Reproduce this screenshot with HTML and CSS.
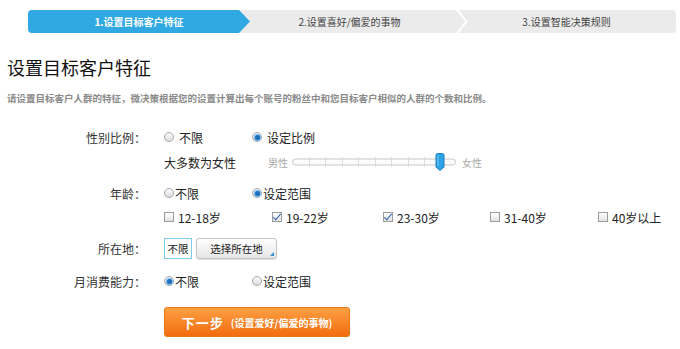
FILE: index.html
```html
<!DOCTYPE html>
<html lang="zh-CN">
<head>
<meta charset="utf-8">
<title>设置目标客户特征</title>
<link rel="stylesheet" href="styles.css">
</head>
<body>
<div class="page">
  <div class="steps">
    <div class="step step-active">1.设置目标客户特征</div>
    <div class="step step-mid">2.设置喜好/偏爱的事物
      <svg class="chev" width="12" height="23" viewBox="0 0 12 23"><polyline points="0.5,-1 10.5,11.5 0.5,24" fill="none" stroke="#fff" stroke-width="2"/></svg>
    </div>
    <div class="step step-last">3.设置智能决策规则</div>
  </div>

  <h1 class="title">设置目标客户特征</h1>
  <p class="desc">请设置目标客户人群的特征，微决策根据您的设置计算出每个账号的粉丝中和您目标客户相似的人群的个数和比例。</p>

  <div class="form">
    <div class="row r1">
      <div class="label">性别比例：</div>
      <div class="opts">
        <span class="opt"><span class="radio"></span><span class="gap">不限</span></span>
        <span class="opt"><span class="radio on"></span><span class="gap">设定比例</span></span>
      </div>
    </div>
    <div class="row r2">
      <div class="label"></div>
      <div class="ratio">
        <span class="ratio-text">大多数为女性</span>
        <span class="sl-lab">男性</span>
        <svg class="slider" width="166" height="20" viewBox="0 0 166 20">
          <rect x="0.5" y="7" width="163" height="6" rx="3" fill="#fbfbfb" stroke="#c9c9c9"/>
          <g stroke="#dcdcdc" stroke-width="1">
            <line x1="17.5" y1="5" x2="17.5" y2="15"/>
            <line x1="33.5" y1="5" x2="33.5" y2="15"/>
            <line x1="50.5" y1="5" x2="50.5" y2="15"/>
            <line x1="66.5" y1="5" x2="66.5" y2="15"/>
            <line x1="83.5" y1="5" x2="83.5" y2="15"/>
            <line x1="99.5" y1="5" x2="99.5" y2="15"/>
            <line x1="116.5" y1="5" x2="116.5" y2="15"/>
            <line x1="132.5" y1="5" x2="132.5" y2="15"/>
          </g>
          <path d="M145.5 1.5 h5 a1.5 1.5 0 0 1 1.5 1.5 V15 L148 18.5 L144 15 V3 a1.5 1.5 0 0 1 1.5 -1.5 Z" fill="#2ca3e6" stroke="#1c80c2"/>
          <line x1="146" y1="3" x2="146" y2="14" stroke="#7cc8f2" stroke-width="1"/>
        </svg>
        <span class="sl-lab">女性</span>
      </div>
    </div>
    <div class="row r3">
      <div class="label">年龄：</div>
      <div class="opts">
        <span class="opt"><span class="radio"></span>不限</span>
        <span class="opt"><span class="radio on"></span>设定范围</span>
      </div>
    </div>
    <div class="row r4">
      <div class="label"></div>
      <div class="opts">
        <span class="opt chk-opt"><span class="chk"></span>12-18岁</span>
        <span class="opt chk-opt"><span class="chk on"></span>19-22岁</span>
        <span class="opt chk-opt"><span class="chk on"></span>23-30岁</span>
        <span class="opt chk-opt"><span class="chk"></span>31-40岁</span>
        <span class="opt chk-opt"><span class="chk"></span>40岁以上</span>
      </div>
    </div>
    <div class="row r5">
      <div class="label">所在地：</div>
      <div class="opts">
        <span class="loc-box">不限</span>
        <button class="loc-btn" type="button">选择所在地</button>
      </div>
    </div>
    <div class="row r6">
      <div class="label">月消费能力：</div>
      <div class="opts">
        <span class="opt"><span class="radio on"></span>不限</span>
        <span class="opt"><span class="radio"></span>设定范围</span>
      </div>
    </div>
    <div class="row r7">
      <div class="label"></div>
      <button class="next" type="button"><span class="next-main">下一步</span><span class="next-sub">(设置爱好/偏爱的事物)</span></button>
    </div>
  </div>
</div>
</body>
</html>
```

FILE: styles.css
```css
* { box-sizing: border-box; }
html, body { margin: 0; padding: 0; background: #fff; }
body {
  font-family: "Noto Sans CJK SC", "Liberation Sans", sans-serif;
  color: #222;
}
.page { padding: 10px 0 0 7px; width: 680px; }

/* steps bar */
.steps {
  margin-left: 21px;
  width: 648px;
  height: 23px;
  display: flex;
  background: #ebebeb;
  border-radius: 4px;
}
.step {
  position: relative;
  height: 23px;
  line-height: 23px;
  font-size: 10px;
  text-align: center;
  color: #444;
}
.step-active {
  width: 222px;
  background: #30a8e2;
  color: #fff;
  font-weight: bold;
  border-radius: 4px 0 0 4px;
  clip-path: polygon(0 0, calc(100% - 11px) 0, 100% 50%, calc(100% - 11px) 100%, 0 100%);
}
.step-mid { width: 207px; padding-right: 8px; }
.step-last { width: 219px; }
.chev { position: absolute; right: -11px; top: 0; }

.title {
  margin: 23px 0 0;
  font-size: 18px;
  line-height: 22px;
  font-weight: normal;
  color: #111;
}
.desc {
  margin: 13px 0 0;
  font-size: 9.5px;
  line-height: 14px;
  font-weight: bold;
  color: #8a8a8a;
  white-space: nowrap;
}

/* form */
.form { margin-top: 22px; }
.row { display: flex; align-items: center; height: 20px; }
.label {
  width: 157px;
  padding-right: 18px;
  text-align: right;
  font-size: 12px;
  color: #333;
  flex: none;
}
.opts { display: flex; align-items: center; font-size: 12px; color: #222; }
.opt { display: inline-flex; align-items: center; width: 88px; }
.gap { margin-left: 4px; }
.chk-opt { width: 108px; }
.chk-opt:nth-child(2) { width: 111px; }
.chk-opt:nth-child(3) { width: 107px; }

.r2 { margin-top: 5px; }
.r3 { margin-top: 11px; }
.r4 { margin-top: 4px; }
.r5 { margin-top: 11px; height: 21px; }
.r6 { margin-top: 12px; }
.r7 { margin-top: 16px; height: 30px; }

.radio {
  width: 10px; height: 10px;
  border-radius: 50%;
  border: 1px solid #a8a8a8;
  background: linear-gradient(#fdfdfd, #dcdcdc);
  display: inline-flex; align-items: center; justify-content: center;
  flex: none;
  margin-right: 1px;
}
.radio.on::after {
  content: "";
  width: 5px; height: 5px;
  border-radius: 50%;
  background: #1f6fb8;
  box-shadow: 0 0 1px 1px #6fb4ea;
}

.chk {
  width: 10px; height: 10px;
  border: 1px solid #9d9d9d;
  background: linear-gradient(#fff, #e2e2e2);
  flex: none;
  margin-right: 4px;
  position: relative;
}
.chk.on::after {
  content: "";
  position: absolute;
  left: 2px; top: -1px;
  width: 3px; height: 7px;
  border: solid #2a5fb0;
  border-width: 0 1.5px 1.5px 0;
  transform: rotate(40deg);
}

/* ratio row */
.ratio { display: flex; align-items: center; font-size: 12px; }
.ratio-text { width: 104px; color: #222; }
.sl-lab { font-size: 10px; color: #a8a8a8; }
.slider { margin: 0 0 0 4px; display: block; }
.ratio .sl-lab:last-child { margin-left: 4px; }

/* location */
.loc-box {
  display: inline-flex; align-items: center; justify-content: center;
  width: 28px; height: 21px;
  border: 1px solid #7fcbec;
  font-size: 10.5px;
  color: #111;
  background: #fff;
}
.loc-btn {
  position: relative;
  margin-left: 4px;
  width: 81px; height: 21px;
  border: 1px solid #c4c4c4;
  border-radius: 3px;
  background: linear-gradient(#ffffff, #e6e6e6);
  font-family: inherit;
  font-size: 10.5px;
  color: #222;
  padding: 0;
  box-shadow: 0 1px 1px rgba(0,0,0,0.12);
}
.loc-btn::after {
  content: "";
  position: absolute;
  right: 2px; bottom: 2px;
  width: 0; height: 0;
  border-left: 4px solid transparent;
  border-bottom: 4px solid #2f8fd6;
}

/* next button */
.next {
  width: 186px; height: 30px;
  border: 1px solid #e77914;
  border-radius: 3px;
  background: linear-gradient(#fca043, #f36c10);
  color: #fff;
  font-family: inherit;
  font-weight: bold;
  display: flex; align-items: center; justify-content: center;
  padding: 0;
  box-shadow: 0 1px 1px rgba(0,0,0,0.15);
}
.next-main { font-size: 13px; letter-spacing: 1px; }
.next-sub { font-size: 10px; margin-left: 7px; }
```
